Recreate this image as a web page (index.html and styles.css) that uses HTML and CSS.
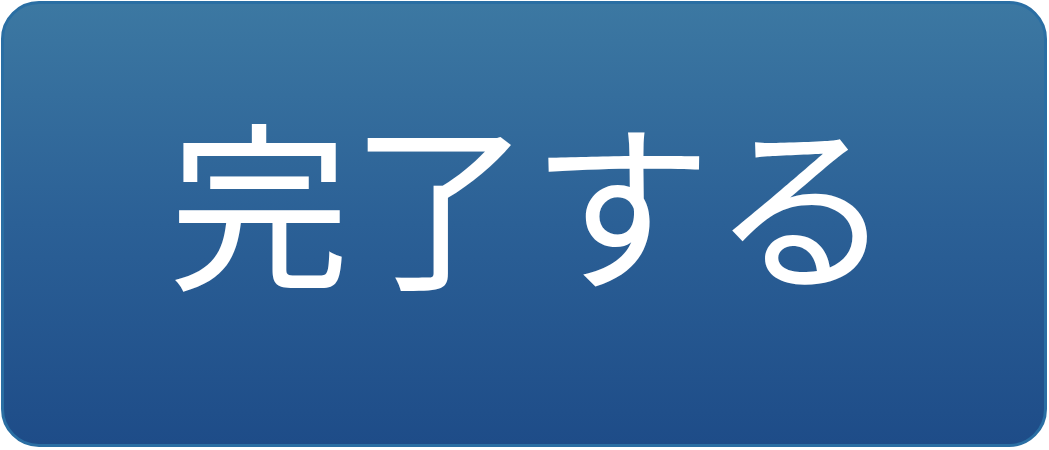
FILE: index.html
```html
<!DOCTYPE html>
<html lang="ja">
<head>
<meta charset="utf-8">
<link rel="stylesheet" href="styles.css">
</head>
<body>
<div class="page">
  <button class="done-btn"><span class="label">完了する</span></button>
</div>
</body>
</html>
```

FILE: styles.css
```css
html, body {
  margin: 0;
  padding: 0;
  background: #ffffff;
}
.page {
  width: 1049px;
  height: 450px;
  padding: 1px 2px 3px 1px;
  box-sizing: border-box;
  display: flex;
}
.done-btn {
  flex: 1;
  margin: 0;
  padding: 0 0 54px 14px;
  border: 3px solid #2a6ea3;
  border-radius: 38px;
  background: linear-gradient(to bottom, #3c78a2 0%, #2b6096 50%, #1e4c88 100%);
  display: flex;
  align-items: center;
  justify-content: center;
  cursor: pointer;
}
.label {
  font-family: "Noto Sans CJK JP", "Noto Sans", sans-serif;
  font-size: 181px;
  line-height: 1;
  color: #ffffff;
  font-weight: 400;
}
```
